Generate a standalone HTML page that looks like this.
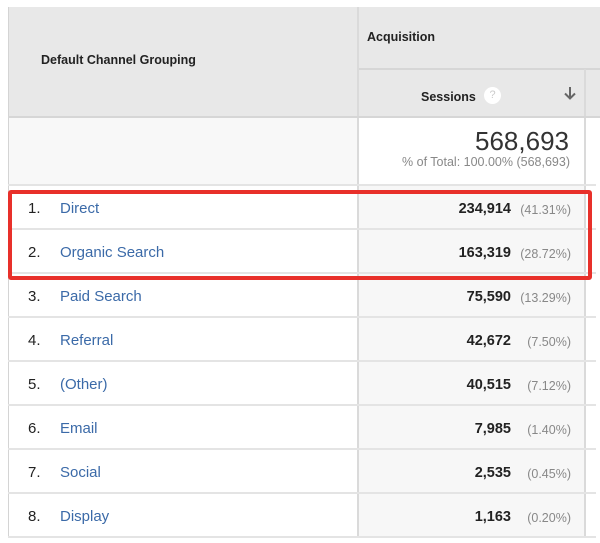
<!DOCTYPE html>
<html><head><style>
body{margin:0;width:600px;height:543px;background:#fff;font-family:"Liberation Sans",Arial,sans-serif;position:relative;overflow:hidden}
.a{position:absolute}
.hd{background:#e8e8e8}
.t{position:absolute;white-space:nowrap}
</style></head><body>
<div class="a hd" style="left:8px;top:7px;width:592px;height:110px"></div>
<div class="a" style="left:8px;top:7px;width:1px;height:530px;background:#d4d4d4"></div>
<div class="a" style="left:357px;top:7px;width:2px;height:530px;background:#dadada"></div>
<div class="a" style="left:359px;top:68px;width:241px;height:2px;background:#d6d6d6"></div>
<div class="a" style="left:584px;top:69px;width:2px;height:468px;background:#dadada"></div>
<div class="a" style="left:8px;top:116px;width:592px;height:2px;background:#d6d6d6"></div>
<div class="t" style="left:41px;top:53px;font-size:12.5px;font-weight:bold;color:#222">Default Channel Grouping</div>
<div class="t" style="left:367px;top:30px;font-size:12.5px;font-weight:bold;color:#222">Acquisition</div>
<div class="t" style="left:421px;top:90px;font-size:12.5px;font-weight:bold;color:#222">Sessions</div>
<div class="a" style="left:484px;top:87px;width:17px;height:17px;border-radius:50%;background:#fff;color:#ccc;font-size:11px;text-align:center;line-height:17px">?</div>
<svg class="a" style="left:563px;top:85px" width="14" height="16" viewBox="0 0 14 16"><path d="M7 2V13M2 8.5L7 13.5L12 8.5" stroke="#666" stroke-width="2" fill="none"/></svg>
<div class="a" style="left:9px;top:118px;width:348px;height:67px;background:#f8f8f8"></div>
<div class="t" style="right:31px;top:126px;font-size:26px;color:#333">568,693</div>
<div class="t" style="right:30px;top:155px;font-size:12.5px;color:#888">% of Total: 100.00% (568,693)</div>
<div class="a" style="left:359px;top:185px;width:225px;height:352px;background:#f7f7f7"></div>
<div id="rows"></div>
<script>
var d=[["Direct","234,914","(41.31%)"],["Organic Search","163,319","(28.72%)"],["Paid Search","75,590","(13.29%)"],["Referral","42,672","(7.50%)"],["(Other)","40,515","(7.12%)"],["Email","7,985","(1.40%)"],["Social","2,535","(0.45%)"],["Display","1,163","(0.20%)"]];
var h="";
for(var i=0;i<=8;i++){h+='<div class="a" style="left:8px;top:'+(184+44*i)+'px;width:588px;height:2px;background:#e4e4e4;z-index:2"></div>';}
d.forEach(function(r,i){var y=185+44*i;
h+='<div class="t" style="left:28px;top:'+(y+15)+'px;font-size:15px;color:#222;z-index:3">'+(i+1)+'.</div>';
h+='<div class="t" style="left:60px;top:'+(y+15)+'px;font-size:15px;color:#3b6aa8;z-index:3">'+r[0]+'</div>';
h+='<div class="t" style="right:89px;top:'+(y+16)+'px;font-size:14.5px;font-weight:bold;color:#222;z-index:3">'+r[1]+'</div>';
h+='<div class="t" style="right:29px;top:'+(y+18)+'px;font-size:12.5px;color:#888;z-index:3">'+r[2]+'</div>';});
document.getElementById("rows").outerHTML=h;
</script>
<div class="a" style="left:8px;top:190px;width:576px;height:82px;border:4px solid #e8302a;border-radius:3px;z-index:5"></div>
</body></html>
